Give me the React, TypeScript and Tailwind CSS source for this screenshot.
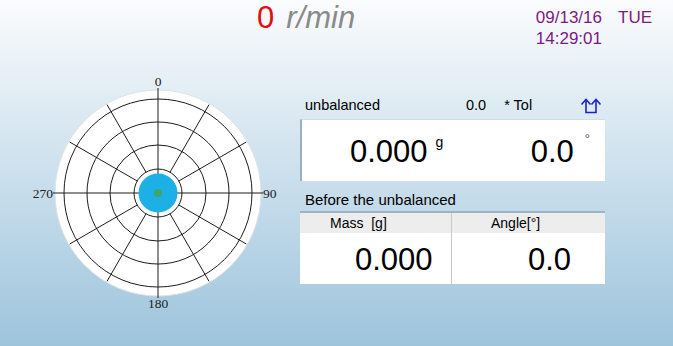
import React from 'react';

const sans = { fontFamily: '"Liberation Sans", Arial, sans-serif' };

function PolarChart() {
  const cx = 138;
  const cy = 121;
  const rings = [24, 48, 71, 94];
  const spokes = Array.from({ length: 12 }, (_, i) => i * 30);

  return (
    <svg width={265} height={240} viewBox="0 0 265 240" className="block">
      <circle cx={cx} cy={cy} r={103} fill="#ffffff" stroke="#dde3e8" strokeWidth={1} />
      {rings.map((r) => (
        <circle key={r} cx={cx} cy={cy} r={r} fill="none" stroke="#1c1c1c" strokeWidth={1} />
      ))}
      {spokes.map((deg) => {
        const a = (deg * Math.PI) / 180;
        const inner = deg % 90 === 0 ? 0 : 24;
        const outer = deg % 90 === 0 ? 105 : 102;
        return (
          <line
            key={deg}
            x1={cx + inner * Math.sin(a)}
            y1={cy - inner * Math.cos(a)}
            x2={cx + outer * Math.sin(a)}
            y2={cy - outer * Math.cos(a)}
            stroke="#1c1c1c"
            strokeWidth={1}
          />
        );
      })}
      <circle cx={cx} cy={cy} r={19.5} fill="#1cb0e6" />
      <circle cx={cx} cy={cy} r={4} fill="#3da866" />
      <g fontFamily='"Liberation Serif", "DejaVu Serif", serif' fontSize={13.5} fill="#222">
        <text x={cx} y={14} textAnchor="middle">0</text>
        <text x={cx} y={236} textAnchor="middle">180</text>
        <text x={33} y={cy + 4.5} textAnchor="end">270</text>
        <text x={243} y={cy + 4.5}>90</text>
      </g>
    </svg>
  );
}

function DoubleArrow() {
  return (
    <svg width={22} height={17} viewBox="0 0 22 17" fill="none" stroke="#1b22c8" strokeWidth={1.6}>
      <path d="M6 3 V15.5 H16 V3" />
      <path d="M1.5 7.5 L6 2.5 L10.5 7.5" />
      <path d="M11.5 7.5 L16 2.5 L20.5 7.5" />
    </svg>
  );
}

export default function App() {
  return (
    <div
      className="w-[673px] h-[346px] overflow-hidden bg-gradient-to-b from-[#fbfcfd] to-[#9dc4dc] text-black"
      style={sans}
    >
      <header className="flex items-start h-[66px]">
        <div className="w-[257px] shrink-0" />
        <div className="flex items-baseline gap-[12px] pt-[2px] leading-none">
          <span className="text-[31px] text-[#e0100c]">0</span>
          <span className="text-[31px] italic text-[#8a8a8a]">r/min</span>
        </div>
        <div className="ml-auto pr-[21px] pt-[7px] text-[17px] leading-[21px] text-[#7c1a82]">
          <div className="flex gap-[16px]">
            <span>09/13/16</span>
            <span>TUE</span>
          </div>
          <div>14:29:01</div>
        </div>
      </header>

      <main className="flex">
        <div className="pl-[20px] pt-[6px]">
          <PolarChart />
        </div>

        <section className="ml-[15px] w-[305px] pt-[26px]">
          <div className="flex items-end h-[20px] px-[5px] text-[14.5px] leading-none">
            <span>unbalanced</span>
            <span className="ml-[86px]">0.0</span>
            <span className="ml-[18px]">* Tol</span>
            <span className="ml-auto mr-[-2px] mb-[-2px]">
              <DoubleArrow />
            </span>
          </div>
          <div className="mt-[7px] h-[62px] bg-white border-l-2 border-l-[#98aec4] border-t border-t-[#d3dce5] flex items-start">
            <span className="ml-[48px] mt-[16px] text-[31px] leading-none">0.000</span>
            <span className="ml-[8px] mt-[15px] text-[14px] leading-none">g</span>
            <span className="ml-auto mt-[16px] text-[31px] leading-none">0.0</span>
            <span className="ml-[11px] mr-[15px] mt-[12px] text-[13px] leading-none text-[#555]">°</span>
          </div>

          <div className="mt-[10px] px-[5px] text-[15px] leading-[18px]">Before the unbalanced</div>
          <div className="mt-[2px] border-t-2 border-t-[#9fb3c6]">
            <div className="grid grid-cols-[151px_1fr] bg-[#ededed] h-[20px] text-[14px] leading-[20px]">
              <span className="pl-[30px]">Mass&nbsp;&nbsp;[g]</span>
              <span className="pl-[39px] border-l border-l-[#c9c9c9]">Angle[°]</span>
            </div>
            <div className="grid grid-cols-[151px_1fr] bg-white h-[51px] text-[31px] leading-none">
              <span className="pl-[55px] pt-[11px]">0.000</span>
              <span className="pl-[76px] pt-[11px] border-l border-l-[#c9c9c9]">0.0</span>
            </div>
          </div>
        </section>
      </main>
    </div>
  );
}
